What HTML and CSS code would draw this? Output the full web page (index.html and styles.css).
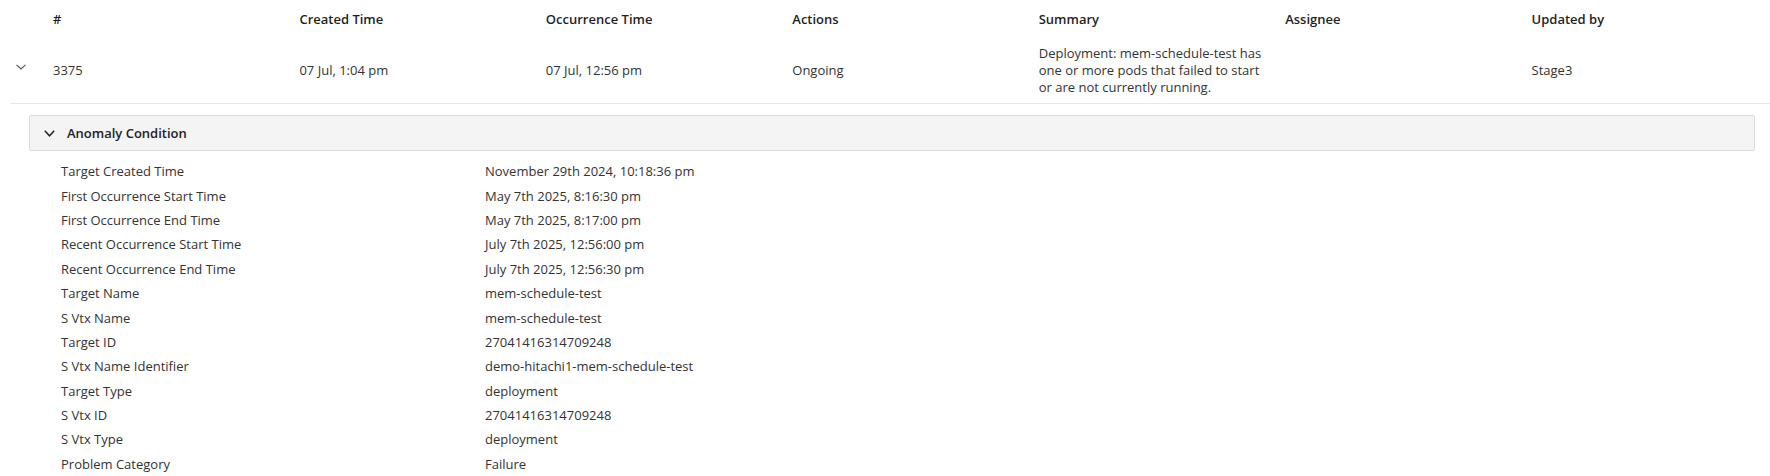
FILE: index.html
```html
<!DOCTYPE html>
<html lang="en">
<head>
<meta charset="utf-8">
<title>Anomaly</title>
<link rel="stylesheet" href="styles.css">
</head>
<body>
<div class="table">
  <div class="thead">
    <div class="cell"></div>
    <div class="cell">#</div>
    <div class="cell">Created Time</div>
    <div class="cell">Occurrence Time</div>
    <div class="cell">Actions</div>
    <div class="cell">Summary</div>
    <div class="cell">Assignee</div>
    <div class="cell">Updated by</div>
  </div>
  <div class="row">
    <div class="cell expand">
      <svg width="10" height="6" viewBox="0 0 10 6" class="chev-small"><path d="M0.5 0.8 L5 5 L9.5 0.8" fill="none" stroke="#555" stroke-width="1.1"/></svg>
    </div>
    <div class="cell">3375</div>
    <div class="cell">07 Jul, 1:04 pm</div>
    <div class="cell">07 Jul, 12:56 pm</div>
    <div class="cell">Ongoing</div>
    <div class="cell">Deployment: mem-schedule-test has one or more pods that failed to start or are not currently running.</div>
    <div class="cell"></div>
    <div class="cell">Stage3</div>
  </div>
  <div class="details">
    <div class="panel">
      <svg width="11" height="7" viewBox="0 0 11 7" class="chev"><path d="M0.8 0.8 L5.5 5.8 L10.2 0.8" fill="none" stroke="#222" stroke-width="1.5"/></svg>
      <span class="panel-title">Anomaly Condition</span>
    </div>
    <div class="kv">
      <div class="k">Target Created Time</div><div class="v">November 29th 2024, 10:18:36 pm</div>
      <div class="k">First Occurrence Start Time</div><div class="v">May 7th 2025, 8:16:30 pm</div>
      <div class="k">First Occurrence End Time</div><div class="v">May 7th 2025, 8:17:00 pm</div>
      <div class="k">Recent Occurrence Start Time</div><div class="v">July 7th 2025, 12:56:00 pm</div>
      <div class="k">Recent Occurrence End Time</div><div class="v">July 7th 2025, 12:56:30 pm</div>
      <div class="k">Target Name</div><div class="v">mem-schedule-test</div>
      <div class="k">S Vtx Name</div><div class="v">mem-schedule-test</div>
      <div class="k">Target ID</div><div class="v">27041416314709248</div>
      <div class="k">S Vtx Name Identifier</div><div class="v">demo-hitachi1-mem-schedule-test</div>
      <div class="k">Target Type</div><div class="v">deployment</div>
      <div class="k">S Vtx ID</div><div class="v">27041416314709248</div>
      <div class="k">S Vtx Type</div><div class="v">deployment</div>
      <div class="k">Problem Category</div><div class="v">Failure</div>
    </div>
  </div>
</div>
</body>
</html>
```
FILE: styles.css
```css
html, body {
  margin: 0;
  padding: 0;
  background: #fff;
}
body {
  font-family: "Open Sans", "Noto Sans", sans-serif;
  font-size: 13px;
  color: #333;
}
.table {
  margin-left: 10px;
}
.thead, .row {
  display: grid;
  grid-template-columns: 35px repeat(7, 1fr);
  align-items: center;
}
.thead {
  height: 37px;
  font-weight: 600;
  color: #1f1f1f;
}
.row {
  min-height: 66px;
  border-bottom: 1px solid #e8e8e8;
  line-height: 17px;
}
.cell {
  padding: 0 8px;
}
.cell.expand {
  padding: 0 0 0 6px;
  display: flex;
  align-items: center;
  margin-top: -6px;
}
.chev-small {
  display: block;
}
.details {
  padding: 11px 15px 0 19px;
}
.panel {
  height: 34px;
  background: #f4f4f4;
  border: 1px solid #dcdcdc;
  border-radius: 2px;
  display: flex;
  align-items: center;
  padding-left: 14px;
}
.chev {
  display: block;
  margin-right: 12px;
  margin-top: 1px;
}
.panel-title {
  font-weight: 600;
  color: #222;
}
.kv {
  display: grid;
  grid-template-columns: 424px 1fr;
  grid-auto-rows: 24.4px;
  align-items: center;
  padding-left: 32px;
  margin-top: 8px;
}
```
